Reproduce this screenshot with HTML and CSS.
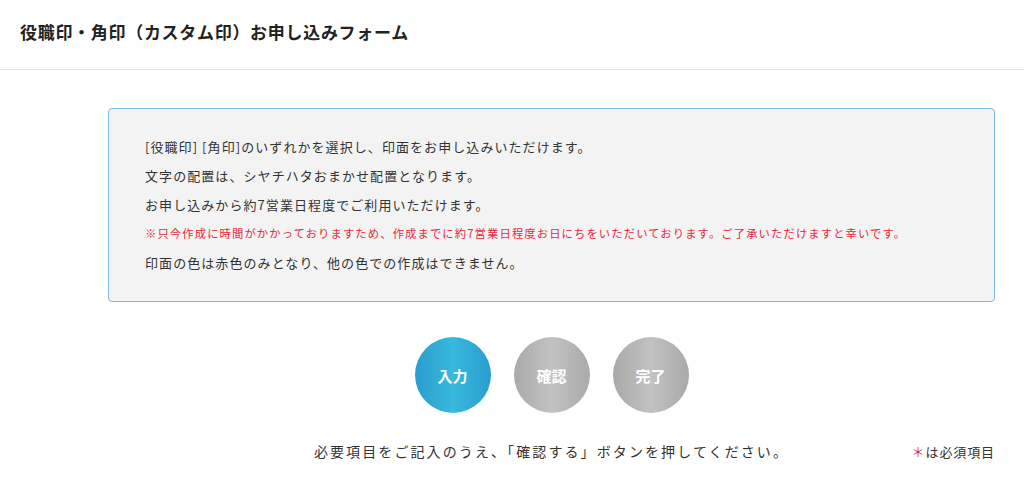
FILE: index.html
```html
<!DOCTYPE html>
<html lang="ja">
<head>
<meta charset="utf-8">
<title>役職印・角印（カスタム印）お申し込みフォーム</title>
<link rel="stylesheet" href="styles.css">
</head>
<body>
<header class="page-header">
  <h1 class="page-title">役職印・角印（カスタム印）お申し込みフォーム</h1>
</header>
<main class="content">
  <section class="notice">
    <p class="notice-line">[役職印] [角印]のいずれかを選択し、印面をお申し込みいただけます。</p>
    <p class="notice-line">文字の配置は、シヤチハタおまかせ配置となります。</p>
    <p class="notice-line">お申し込みから約7営業日程度でご利用いただけます。</p>
    <p class="notice-line notice-alert">※只今作成に時間がかかっておりますため、作成までに約7営業日程度お日にちをいただいております。ご了承いただけますと幸いです。</p>
    <p class="notice-line">印面の色は赤色のみとなり、他の色での作成はできません。</p>
  </section>
  <ol class="steps">
    <li class="step step-active">入力</li>
    <li class="step">確認</li>
    <li class="step">完了</li>
  </ol>
  <div class="guide">
    <span></span>
    <p class="guide-text">必要項目をご記入のうえ、「確認する」ボタンを押してください。</p>
    <p class="required-note"><span class="asterisk">＊</span>は必須項目</p>
  </div>
</main>
</body>
</html>
```

FILE: styles.css
```css
* { box-sizing: border-box; }
html, body { margin: 0; padding: 0; background: #fff; }
body {
  font-family: "Noto Sans CJK JP", "Noto Sans", sans-serif;
  color: #333;
}
.page-header {
  height: 70px;
  border-bottom: 1px solid #e3e3e3;
  display: flex;
  align-items: center;
  padding: 0 20px 6px;
}
.page-title {
  margin: 0;
  font-size: 17px;
  font-weight: 700;
  letter-spacing: 0.7px;
  color: #222;
}
.content {
  padding: 38px 29px 0 108px;
}
.notice {
  background: #f3f3f3;
  border: 1px solid #7cb9e2;
  border-radius: 4px;
  padding: 23px 36px 24px;
}
.notice-line {
  margin: 0;
  font-size: 13px;
  line-height: 29px;
  letter-spacing: 1.07px;
  color: #333;
}
.notice-alert {
  font-size: 11.3px;
  letter-spacing: 1.13px;
  color: #e8273f;
}
.steps {
  list-style: none;
  margin: 35px 0 0;
  padding: 0;
  display: flex;
  justify-content: center;
  gap: 23px;
}
.step {
  width: 76px;
  height: 76px;
  border-radius: 50%;
  display: flex;
  align-items: center;
  justify-content: center;
  color: #fff;
  font-weight: 700;
  font-size: 15px;
  background: linear-gradient(90deg, #a9a9a9 0%, #c2c2c2 50%, #a9a9a9 100%);
}
.step-active {
  background: linear-gradient(90deg, #2a9dcf 0%, #38b9dd 50%, #2a9dcf 100%);
}
.guide {
  margin-top: 28px;
  display: grid;
  grid-template-columns: 1fr auto 1fr;
  align-items: center;
}
.guide-text {
  margin: 0;
  font-size: 14px;
  letter-spacing: 2.1px;
  color: #333;
}
.required-note {
  margin: 0;
  justify-self: end;
  font-size: 13px;
  letter-spacing: 0.9px;
  color: #333;
}
.asterisk { color: #e8273f; }
```
